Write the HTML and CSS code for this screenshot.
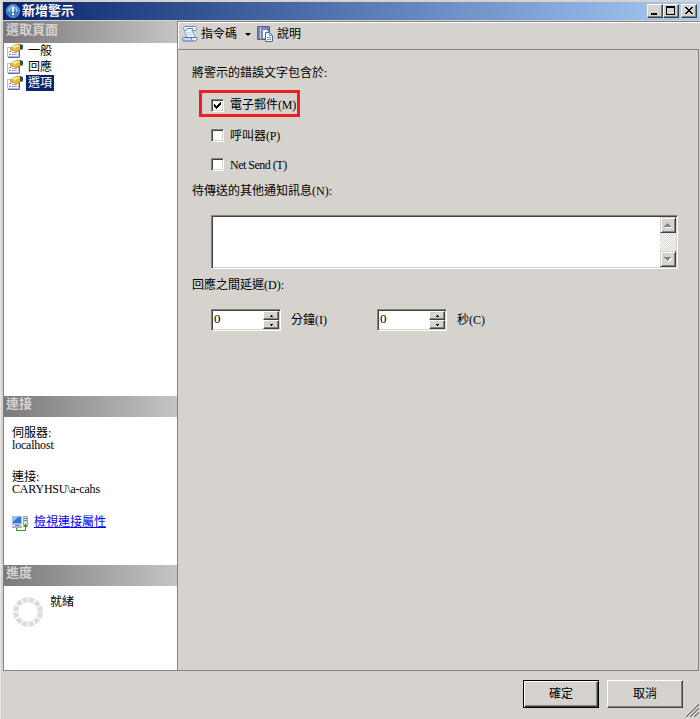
FILE: index.html
```html
<!DOCTYPE html>
<html lang="zh-Hant">
<head>
    <meta charset="UTF-8">
    <meta name="viewport" content="width=device-width, initial-scale=1.0">
    <title>新增警示</title>
    <link rel="stylesheet" href="styles.css">
</head>
<body>
    <!-- Shared icons -->
    <svg class="defs" width="0" height="0">
        <symbol id="page-icon" viewBox="0 0 16 16">
            <path d="M.5 4.500h11v9H.5z" fill="#fff" stroke="#b5bace"/>
            <path d="M1 14.500h11.500V7" fill="none" stroke="#636d84"/>
            <path d="M2 8.500h2M2 11.500h2" stroke="#6b82ce"/>
            <path d="M5 9.500h5M5 11.500h5" stroke="#9ca6d6"/>
            <path d="M3 6l3-3 2-1 3-1 3 1v4l-3 2-2 1-2-2-2 1z" fill="#efb631" stroke="#b57d18" stroke-width=".7"/>
            <path d="M5 4l3-2 3-.5 2 1.500-3 1-2 2z" fill="#ffe784"/>
            <path d="M13 1l3 1v4l-2 1-1-2z" fill="#31515a"/>
        </symbol>
    </svg>

    <div class="window">
        <div class="titlebar">
            <svg class="app-icon" width="14" height="14" viewBox="0 0 14 14">
                <circle cx="7" cy="7" r="6.500" fill="#427dbd" stroke="#5a9ad6"/>
                <path d="M1.500 7a5.500 5.500 0 0 1 11 0c-3-2-8-2-11 0z" fill="#7bb2de"/>
                <path d="M6 3h2v5H6zM6 9h2v2H6z" fill="#fff"/>
                <path d="M3 6h1v2H3zM10 6h1v2h-1z" fill="#b5dbff"/>
            </svg>
            <span class="title">新增警示</span>
            <div class="window-buttons">
                <button class="win-btn"><svg width="12" height="10" viewBox="0 0 12 10"><path d="M2 7h6v2H2z"/></svg></button>
                <button class="win-btn"><svg width="12" height="10" viewBox="0 0 12 10"><path d="M1 0h9v9H1zM2 2v6h7V2z" fill-rule="evenodd"/></svg></button>
                <button class="win-btn close-btn"><svg width="12" height="10" viewBox="0 0 12 10"><path d="M2 1h2v1h1v1h2V2h1V1h2v1H9v1H8v1H7v1h1v1h1v1h1v1H8V7H7V6H5v1H4v1H2V7h1V6h1V5h1V4H4V3H3V2H2z"/></svg></button>
            </div>
        </div>

        <div class="main">
            <div class="sidebar">
                <div class="side-header page-header">選取頁面</div>
                <ul class="page-list">
                    <li><svg width="16" height="16"><use href="#page-icon"/></svg><span>一般</span></li>
                    <li><svg width="16" height="16"><use href="#page-icon"/></svg><span>回應</span></li>
                    <li><svg width="16" height="16"><use href="#page-icon"/></svg><span class="selected">選項</span></li>
                </ul>

                <div class="side-header">連接</div>
                <div class="connection">
                    <div class="info">伺服器:<br><span class="latin">localhost</span></div>
                    <div class="info">連接:<br><span class="latin">CARYHSU\a-cahs</span></div>
                    <div class="link-row">
                        <svg width="17" height="17" viewBox="0 0 17 17">
                            <path d="M0 1h10v9H0z" fill="#adbad6"/>
                            <path d="M1 2h8v6H1z" fill="#2979de"/>
                            <path d="M1 2h5L2 6H1z" fill="#84c7ff"/>
                            <path d="M3 10h5v1H3z" fill="#848a9c"/>
                            <path d="M0 11h10v2H0z" fill="#a5b2ce"/>
                            <path d="M11.500 1.500h4v9h-4z" fill="#dee3ef" stroke="#9ca2b5"/>
                            <path d="M12 3.500h3M12 5.500h3" stroke="#737d94"/>
                            <path d="M4.500 13v2.500h9V10" fill="none" stroke="#299a10"/>
                            <path d="M11 12l2.500-3.500L16 12z" fill="#299a10"/>
                        </svg>
                        <a href="#">檢視連接屬性</a>
                    </div>
                </div>

                <div class="side-header">進度</div>
                <div class="progress">
                    <svg width="30" height="30" viewBox="0 0 30 30">
                        <circle cx="15" cy="15" r="12.300" fill="none" stroke="#dedbde" stroke-width="5" stroke-dasharray="5.240 1.200" stroke-dashoffset="-.6"/>
                    </svg>
                    <span>就緒</span>
                </div>
            </div>

            <div class="content">
                <div class="toolbar">
                    <svg width="16" height="16" viewBox="0 0 16 16">
                        <path d="M4 2.500h7l-1 2c0 2 3 4 3 7H5c0-3-3-4-2-7z" fill="#e7f3ff" stroke="#7b9ace"/>
                        <path d="M3 .5h10c2 0 2.500 4 0 4h-2.500c0-1.500.5-2 0-2H5c0 2-3.500 2.500-3.500 0C1.500 1.500 2 .5 3 .5z" fill="#f7fbff" stroke="#6b86bd"/>
                        <path d="M2 11.500h8c-1 1 0 3 1 3.500H2C0 15 0 11.500 2 11.500z" fill="#c6dbf7" stroke="#526da5"/>
                        <path d="M10 11.500h4c2 0 1 3.500-1 3.500h-2" fill="#f7fbff" stroke="#526da5"/>
                        <path d="M5 6.500h4M6 8.500h4" stroke="#b5cfef"/>
                    </svg>
                    <span class="tool-text">指令碼</span>
                    <span class="drop-arrow"></span>
                    <svg class="help-icon" width="17" height="16" viewBox="0 0 17 16">
                        <path d="M.5.5h12v13H.5z" fill="#7b82bd" stroke="#5a6194"/>
                        <path d="M3.500 1v12" stroke="#c6cfef"/>
                        <path d="M5.500 3.500h4l2 2v7h-6z" fill="#fff" stroke="#738ab5"/>
                        <path d="M8.500 6.500h4l3 3v6h-7z" fill="#eff7ff" stroke="#526994"/>
                        <path d="M12.500 6.500v3h3M10 11.500h4M10 13.500h4" fill="none" stroke="#7b9ac6"/>
                    </svg>
                    <span class="tool-text">說明</span>
                </div>

                <div class="panel">
                    <div class="label">將警示的錯誤文字包含於:</div>

                    <div class="check-row highlighted">
                        <span class="checkbox"><svg width="9" height="9" viewBox="0 0 9 9"><path d="M1 3h1v1h1v1h1V4h1V3h1V2h1V1h1v3H7v1H6v1H5v1H4v1H3V7H2V6H1z"/></svg></span>
                        <span>電子郵件<span class="latin">(M)</span></span>
                    </div>
                    <div class="check-row">
                        <span class="checkbox"></span>
                        <span>呼叫器<span class="latin">(P)</span></span>
                    </div>
                    <div class="check-row">
                        <span class="checkbox"></span>
                        <span class="net-send">Net Send (T)</span>
                    </div>

                    <div class="label message-label">待傳送的其他通知訊息(N):</div>
                    <div class="message-box">
                        <div class="scrollbar">
                            <div class="scroll-btn"><svg width="8" height="5" viewBox="0 0 8 5"><path d="M1 4h7v1H1z" fill="#fff"/><path d="M3 0h1v1h1v1h1v1h1v1H0V3h1V2h1V1h1z" fill="#848284"/></svg></div>
                            <div class="scroll-btn"><svg width="8" height="5" viewBox="0 0 8 5"><path d="M1 1h7v1H7v1H6v1H5v1H4V4H1z" fill="#fff"/><path d="M0 0h7v1H6v1H5v1H4v1H3V3H2V2H1V1H0z" fill="#848284"/></svg></div>
                        </div>
                    </div>

                    <div class="label delay-label">回應之間延遲(D):</div>
                    <div class="delay-row">
                        <div class="spinner">
                            <span class="value">0</span>
                            <div class="spin-buttons">
                                <span class="spin-btn"><svg width="3" height="2"><path d="M1 0h1v1h1v1H0V1h1z"/></svg></span>
                                <span class="spin-btn"><svg width="3" height="2"><path d="M0 0h3v1H2v1H1V1H0z"/></svg></span>
                            </div>
                        </div>
                        <span class="unit">分鐘(I)</span>
                        <div class="spinner">
                            <span class="value">0</span>
                            <div class="spin-buttons">
                                <span class="spin-btn"><svg width="3" height="2"><path d="M1 0h1v1h1v1H0V1h1z"/></svg></span>
                                <span class="spin-btn"><svg width="3" height="2"><path d="M0 0h3v1H2v1H1V1H0z"/></svg></span>
                            </div>
                        </div>
                        <span class="unit">秒(C)</span>
                    </div>
                </div>
            </div>
        </div>

        <div class="footer">
            <button class="btn default">確定</button>
            <button class="btn">取消</button>
            <svg class="grip" width="14" height="14" viewBox="0 0 14 14">
                <path d="M-.5 14L14-.5M3.500 14L14 3.500M7.500 14L14 7.500" stroke="#fff"/>
                <path d="M1 14L14 1M5 14l9-9M9 14l5-5" stroke="#848284" stroke-width="1.600"/>
            </svg>
        </div>
    </div>
</body>
</html>
```

FILE: styles.css
```css
* {
    box-sizing: border-box;
}

body {
    margin: 0;
    background-color: #d6d3ce;
    font-family: "Liberation Serif", "Noto Sans CJK TC", serif;
    font-size: 12px;
    line-height: 16px;
    color: #000;
}

button {
    font-family: inherit;
    font-size: 12px;
    padding: 0;
    color: #000;
    background-color: #d6d3ce;
}

svg {
    display: block;
    flex-shrink: 0;
}

.defs {
    display: none;
}

.window {
    width: 700px;
    height: 719px;
    padding: 1px 0 0 2px;
    border-left: 1px solid #e7e5e2;
    overflow: hidden;
}

/* Title bar */
.titlebar {
    display: flex;
    align-items: center;
    height: 19px;
    margin-right: 1px;
    padding: 0 2px 0 3px;
    border-top: 1px solid #d6d3ce;
    background: linear-gradient(to right, #08246b, #a5cbf7) padding-box;
}

.title {
    margin-left: 2px;
    font-size: 13px;
    font-weight: bold;
    color: #fff;
}

.window-buttons {
    display: flex;
    margin-left: auto;
}

.win-btn {
    display: flex;
    align-items: center;
    justify-content: center;
    width: 16px;
    height: 14px;
    border: 1px solid;
    border-color: #fff #424142 #424142 #fff;
    box-shadow: inset -1px -1px #848284;
}

.close-btn {
    margin-left: 2px;
}

.main {
    display: flex;
    height: 650px;
    margin-top: 1px;
}

/* Left side */
.sidebar {
    display: flex;
    flex-direction: column;
    width: 175px;
    border: 1px solid #848284;
    border-top: none;
    background-color: #fff;
}

.side-header {
    height: 21px;
    padding-left: 2px;
    font-size: 13px;
    font-weight: bold;
    color: #d6d3ce;
    background: linear-gradient(to right, #7b797b, #c6c3c6);
}

.page-header {
    height: 22px;
    padding-top: 1px;
}

.page-list {
    height: 353px;
    margin: 0;
    padding: 0 0 0 3px;
    list-style: none;
}

.page-list li {
    display: flex;
    height: 16px;
}

.page-list span {
    margin-left: 3px;
    padding: 0 2px;
}

.page-list .selected {
    color: #fff;
    background-color: #08246b;
}

.connection {
    height: 148px;
    padding: 10px 8px 0;
}

.info {
    height: 44px;
    line-height: 12px;
}

.latin {
    letter-spacing: -0.2px;
}

.link-row {
    display: flex;
    align-items: flex-start;
    gap: 5px;
}

.link-row a {
    margin-top: -1px;
    color: #0000ff;
}

.progress {
    display: flex;
    padding: 11px 9px;
}

.progress span {
    margin: -3px 0 0 7px;
}

/* Right side */
.content {
    flex: 1;
    display: flex;
    flex-direction: column;
    border-top: 1px solid #848284;
}

.toolbar {
    display: flex;
    align-items: center;
    height: 27px;
    padding: 0 3px 4px;
    border-top: 1px solid #fff;
    border-left: 1px solid #fff;
}

.tool-text {
    margin-left: 3px;
}

.drop-arrow {
    margin: 1px 6px 0 8px;
    border: 3px solid transparent;
    border-top-color: #000;
    border-bottom: none;
}

.panel {
    flex: 1;
    margin-right: 1px;
    padding: 15px 20px 0 14px;
    border: 1px solid #848284;
    border-left: none;
}

.label {
    height: 16px;
}

.check-row {
    display: flex;
    align-items: center;
    gap: 6px;
    height: 29px;
    padding-left: 19px;
}

.highlighted {
    width: 101px;
    height: 27px;
    margin: 9px 0 4px 7px;
    padding: 3px 0 0 9px;
    border: 3px solid #ef1c21;
    white-space: nowrap;
}

.checkbox {
    width: 13px;
    height: 13px;
    padding: 1px;
    flex-shrink: 0;
    border: 1px solid;
    border-color: #848284 #fff #fff #848284;
    box-shadow: inset 1px 1px #424142, inset -1px -1px #d6d3ce;
    background-color: #fff;
}

.net-send {
    letter-spacing: -0.5px;
}

.message-label {
    margin-top: 4px;
}

.message-box {
    display: flex;
    justify-content: flex-end;
    width: 467px;
    height: 54px;
    margin: 16px 0 0 19px;
    padding: 1px;
    border: 1px solid;
    border-color: #848284 #fff #fff #848284;
    box-shadow: inset 1px 1px #424142, inset -1px -1px #d6d3ce;
    background-color: #fff;
}

.scrollbar {
    display: flex;
    flex-direction: column;
    justify-content: space-between;
    width: 16px;
    background: repeating-conic-gradient(#d6d3ce 0% 25%, #fff 0% 50%) 0 0 / 2px 2px;
}

.scroll-btn {
    display: flex;
    align-items: center;
    justify-content: center;
    height: 16px;
    border: 1px solid;
    border-color: #d6d3ce #424142 #424142 #d6d3ce;
    box-shadow: inset 1px 1px #fff, inset -1px -1px #848284;
    background-color: #d6d3ce;
}

.delay-label {
    margin-top: 8px;
}

.delay-row {
    display: flex;
    align-items: center;
    height: 22px;
    margin: 16px 0 0 19px;
}

.spinner {
    display: flex;
    width: 70px;
    height: 22px;
    padding: 1px;
    border: 1px solid;
    border-color: #848284 #fff #fff #848284;
    box-shadow: inset 1px 1px #424142, inset -1px -1px #d6d3ce;
    background-color: #fff;
}

.value {
    flex: 1;
    padding-left: 1px;
    font-size: 13px;
}

.spin-buttons {
    width: 16px;
}

.spin-btn {
    display: flex;
    align-items: center;
    justify-content: center;
    height: 9px;
    border: 1px solid;
    border-color: #fff #424142 #424142 #fff;
    box-shadow: inset -1px -1px #848284;
    background-color: #d6d3ce;
}

.unit {
    width: 96px;
    padding-left: 10px;
}

/* Bottom buttons */
.footer {
    display: flex;
    justify-content: flex-end;
    gap: 8px;
    height: 48px;
    padding-top: 9px;
}

.btn {
    width: 76px;
    height: 28px;
    padding-bottom: 3px;
    border: 1px solid;
    border-color: #fff #424142 #424142 #fff;
    box-shadow: inset -1px -1px #848284;
}

.default {
    border-color: #000;
    box-shadow: inset 1px 1px #fff, inset -1px -1px #424142, inset -2px -2px #848284;
}

.grip {
    align-self: flex-end;
    margin: 0 1px 2px -6px;
}
```
